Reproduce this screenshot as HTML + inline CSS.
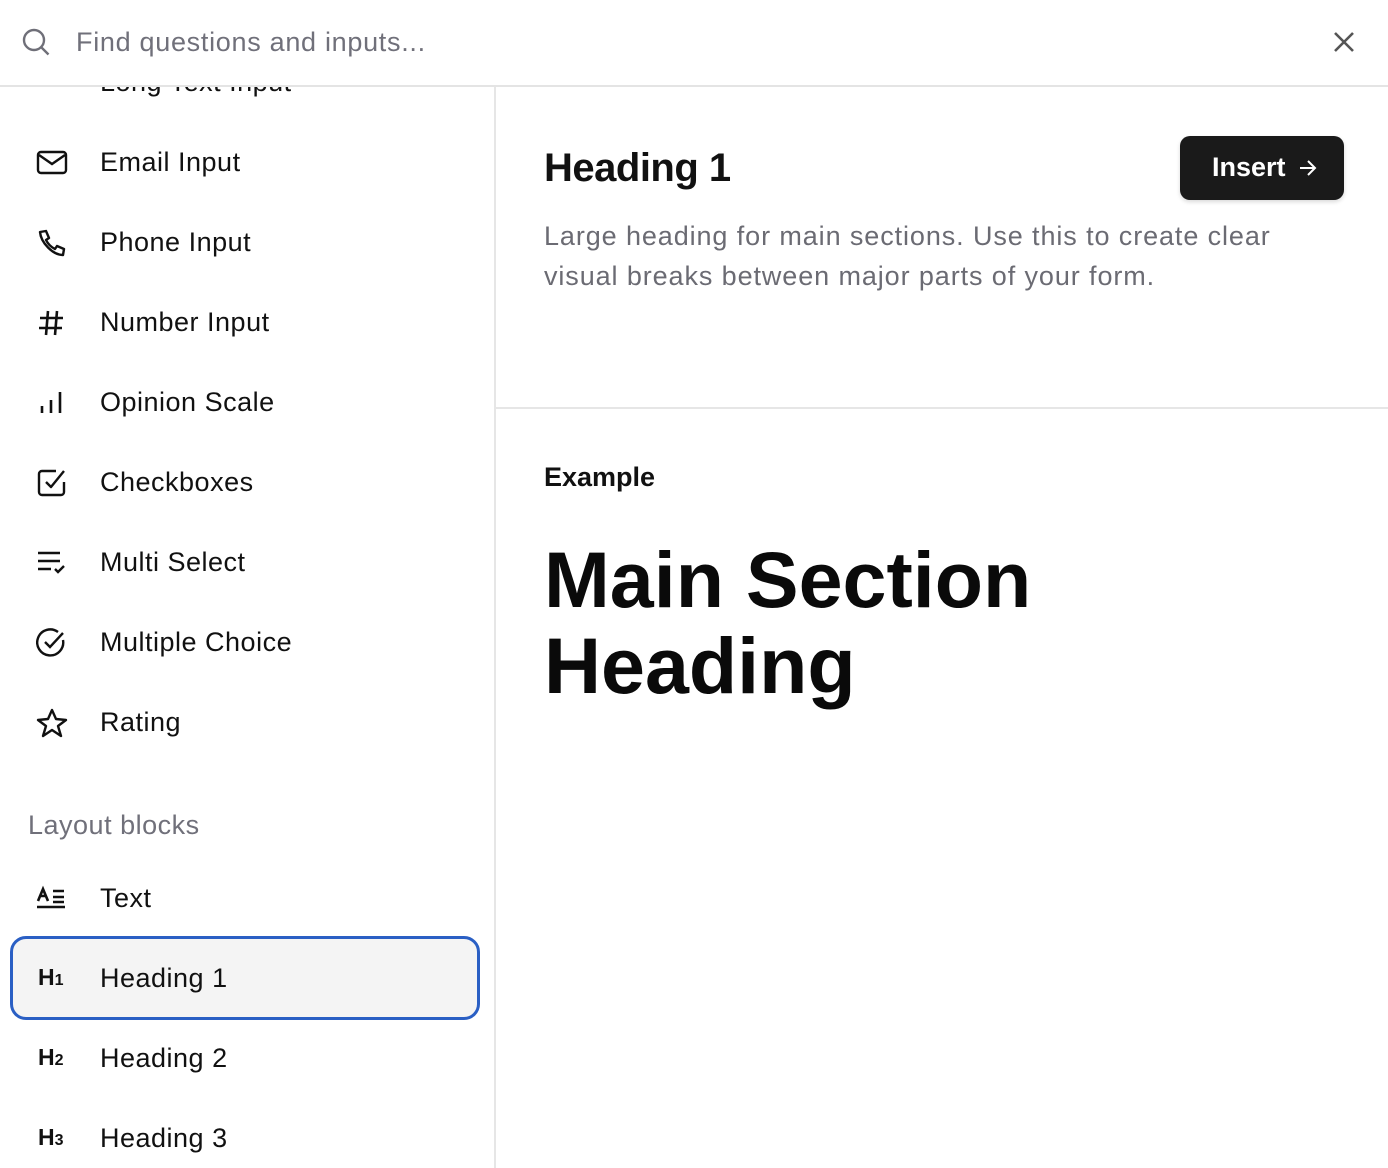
<!DOCTYPE html>
<html><head><meta charset="utf-8"><style>
*{box-sizing:border-box;margin:0;padding:0}
body{width:1388px;height:1168px;overflow:hidden;background:#fff;font-family:"Liberation Sans",sans-serif;color:#111;position:relative}
.top{position:absolute;left:0;top:0;width:1388px;height:87px;border-bottom:2px solid #e4e4e4;background:#fff;z-index:2}
.top .ph{position:absolute;left:76px;top:27px;font-size:27px;letter-spacing:.7px;color:#70707a}
.side{position:absolute;left:0;top:0;width:496px;height:1168px;border-right:2px solid #e6e6e6;overflow:hidden}
.item{position:absolute;left:10px;width:470px;height:84px}
.item .ic{position:absolute;left:26px;top:28px;width:32px;height:30px}
.item .t{position:absolute;left:90px;top:26px;font-size:27px;line-height:32px;letter-spacing:.5px;color:#111}
.sel{background:#f4f4f4;border:3px solid #2a5fc4;border-radius:16px}
.sel .ic{left:25px;top:25px}.sel .t{left:87px;top:23px}
.hic{font-size:23px;font-weight:bold;left:28px!important}
.sel .hic{left:25px!important}
.hic small{font-size:16px}
.sec{position:absolute;left:28px;top:810px;font-size:27px;letter-spacing:.5px;color:#70707a}
svg{display:block}
.h1{position:absolute;left:544px;top:146px;font-size:40px;font-weight:bold;letter-spacing:-.5px}
.btn{position:absolute;left:1180px;top:136px;width:164px;height:64px;background:#1a1a1a;border-radius:10px;color:#fff;font-size:27px;font-weight:bold;box-shadow:0 2px 4px rgba(0,0,0,.15)}
.btn span{position:absolute;left:32px;top:16px}
.desc{position:absolute;left:544px;top:216px;width:800px;font-size:27px;line-height:40px;letter-spacing:.9px;color:#6b6b73}
.div{position:absolute;left:496px;top:407px;width:892px;height:2px;background:#e6e6e6}
.ex{position:absolute;left:544px;top:462px;font-size:27px;font-weight:bold;color:#111}
.big{position:absolute;left:544px;top:537px;font-size:79px;line-height:86px;font-weight:bold;letter-spacing:0;color:#0a0a0a}
</style></head><body>
<div class="side">
 <div class="item" style="top:40px"><div class="ic"><svg width="32" height="30"><path d="M3 6h24" stroke="#111" stroke-width="3"/></svg></div><div class="t">Long Text Input</div></div>
 <div class="item" style="top:120px"><div class="ic"><svg width="32" height="30" fill="none" stroke="#111" stroke-width="2.4"><rect x="2" y="4" width="28" height="21" rx="3"/><path d="M3 7l13 9 13-9"/></svg></div><div class="t">Email Input</div></div>
 <div class="item" style="top:200px"><div class="ic"><svg width="32" height="30" fill="none" stroke="#111" stroke-width="2.4" stroke-linejoin="round"><path d="M4 4l6-1 3 7-3 2c2 4 5 7 9 9l2-3 7 3-1 6C17 27 5 15 4 4z"/></svg></div><div class="t">Phone Input</div></div>
 <div class="item" style="top:280px"><div class="ic"><svg width="32" height="30" stroke="#111" stroke-width="2.6"><path d="M12 3L10 27M21 3l-2 24M4 10h23M3 20h23"/></svg></div><div class="t">Number Input</div></div>
 <div class="item" style="top:360px"><div class="ic"><svg width="32" height="30" stroke="#111" stroke-width="2.6"><path d="M6 18v7M15 12v13M24 4v21"/></svg></div><div class="t">Opinion Scale</div></div>
 <div class="item" style="top:440px"><div class="ic"><svg width="32" height="30" fill="none" stroke="#111" stroke-width="2.4" stroke-linejoin="round"><path d="M28 14v10a3 3 0 01-3 3H6a3 3 0 01-3-3V6a3 3 0 013-3h14"/><path d="M10 14l5 5 13-16"/></svg></div><div class="t">Checkboxes</div></div>
 <div class="item" style="top:520px"><div class="ic"><svg width="32" height="30" fill="none" stroke="#111" stroke-width="2.4"><path d="M2 5h22M2 13h22M2 21h13M19 21l3 3 6-6"/></svg></div><div class="t">Multi Select</div></div>
 <div class="item" style="top:600px"><div class="ic"><svg width="32" height="30" fill="none" stroke="#111" stroke-width="2.4"><path d="M27 12a13 13 0 11-5-8"/><path d="M9 14l5 5 13-14"/></svg></div><div class="t">Multiple Choice</div></div>
 <div class="item" style="top:680px"><div class="ic"><svg width="32" height="30" fill="none" stroke="#111" stroke-width="2.4" stroke-linejoin="round"><path d="M16 2l4 9 10 1-8 6 3 10-9-6-9 6 3-10-8-6 10-1z"/></svg></div><div class="t">Rating</div></div>
 <div class="sec">Layout blocks</div>
 <div class="item" style="top:856px"><div class="ic"><svg width="32" height="30" fill="none" stroke="#111" stroke-width="2.6"><path d="M2 17l5-12 5 12M4 12h6M17 7h11M17 13h11M17 18h11M1 23h28"/></svg></div><div class="t">Text</div></div>
 <div class="item sel" style="top:936px"><div class="ic hic">H<small>1</small></div><div class="t">Heading 1</div></div>
 <div class="item" style="top:1016px"><div class="ic hic">H<small>2</small></div><div class="t">Heading 2</div></div>
 <div class="item" style="top:1096px"><div class="ic hic">H<small>3</small></div><div class="t">Heading 3</div></div>
</div>
<div class="top">
 <svg style="position:absolute;left:22px;top:28px" width="30" height="30" fill="none" stroke="#6f6f78" stroke-width="2.4"><circle cx="12" cy="12" r="10"/><path d="M19.5 19.5l7 7"/></svg>
 <div class="ph">Find questions and inputs...</div>
 <svg style="position:absolute;left:1333px;top:31px" width="22" height="22" stroke="#555" stroke-width="2.6"><path d="M2 2l18 18M20 2L2 20"/></svg>
</div>
<div class="h1">Heading 1</div>
<div class="btn"><span>Insert</span><svg style="position:absolute;left:119px;top:23px" width="18" height="18" fill="none" stroke="#fff" stroke-width="2"><path d="M1 9h15M9 2l7 7-7 7"/></svg></div>
<div class="desc">Large heading for main sections. Use this to create clear<br>visual breaks between major parts of your form.</div>
<div class="div"></div>
<div class="ex">Example</div>
<div class="big">Main Section<br>Heading</div>
</body></html>
